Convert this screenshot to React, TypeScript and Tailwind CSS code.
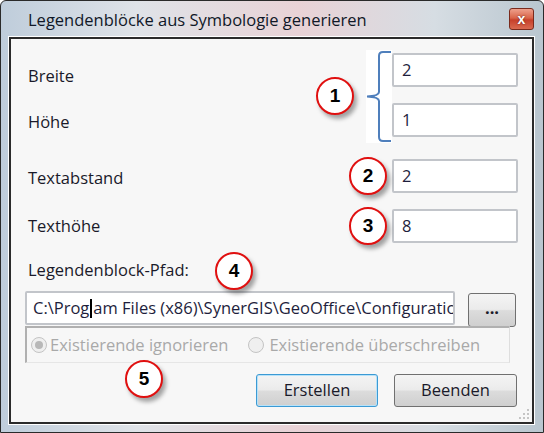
import React from "react";

const ui = { fontFamily: '"Open Sans", "Noto Sans", sans-serif' };
const mark = { fontFamily: '"Liberation Sans", Arial, sans-serif' };

function Marker({ n, className }: { n: number; className: string }) {
  return (
    <div
      className={`absolute w-[38px] h-[38px] rounded-full border-2 border-[#e01010] bg-white flex items-center justify-center shadow-[3px_4px_4px_rgba(0,0,0,0.35)] text-[19px] font-bold text-black ${className}`}
      style={mark}>
      {n}
    </div>
  );
}

function Field({ value }: { value: string }) {
  return (
    <div className="w-[126px] h-[34px] border-2 border-[#c2c5ca] rounded-[2px] bg-white flex items-center pl-[8px] text-[16.5px] text-[#1e1e3c]">
      {value}
    </div>
  );
}

function Radio({ checked }: { checked?: boolean }) {
  return (
    <span className="w-[16px] h-[16px] rounded-full border border-[#c4c4c4] bg-[#efefef] flex items-center justify-center shrink-0">
      {checked && <span className="w-[8px] h-[8px] rounded-full bg-[#b8b8b8]" />}
    </span>
  );
}

const btn =
  "h-[33px] rounded-[3px] border bg-[linear-gradient(180deg,#f4f4f4_0%,#ebebeb_48%,#dcdcdc_52%,#cfcfcf_100%)] flex items-center justify-center text-[16.5px] text-[#1a1a2a]";

export default function App() {
  return (
    <div
      className="relative w-[544px] h-[433px] overflow-hidden border border-[#2a2a2a] rounded-t-[6px] bg-[linear-gradient(90deg,#bfcddb_0%,#dfe3e8_25%,#e9d2d6_55%,#d6dde3_80%,#b9c6cf_100%)]"
      style={ui}>
      {/* title bar */}
      <div className="h-[36px] flex items-center justify-between pl-[27px] pr-[9px]">
        <span className="text-[16.5px] text-[#101828] pt-[2px]">Legendenblöcke aus Symbologie generieren</span>
        <div className="w-[25px] h-[22px] rounded-[3px] border border-[#7a2a1c] bg-[linear-gradient(180deg,#eea08c_0%,#d9654a_45%,#c7402a_55%,#d96a50_100%)] flex items-center justify-center text-white text-[14px] font-bold leading-none [text-shadow:0_0_2px_#5a1a10]" style={mark}>
          x
        </div>
      </div>

      {/* client area */}
      <div className="relative ml-[8px] mr-[9px] h-[387px] border-2 border-[#2b2b2b] outline outline-1 outline-white bg-[#f7f7f7] flex flex-col text-[#1a1a2a]">
        <div className="pt-[14px] pr-[14px] flex flex-col text-[16.5px]">
          <div className="h-[34px] flex items-center justify-between">
            <span className="pl-[17px] pt-[12px]">Breite</span>
            <Field value="2" />
          </div>
          <div className="mt-[16px] h-[34px] flex items-center justify-between">
            <span className="pl-[17px] pt-[4px]">Höhe</span>
            <Field value="1" />
          </div>
          <div className="mt-[22px] h-[34px] flex items-center justify-between">
            <span className="pl-[17px] pt-[4px]">Textabstand</span>
            <Field value="2" />
          </div>
          <div className="mt-[16px] h-[34px] flex items-center justify-between">
            <span className="pl-[17px]">Texthöhe</span>
            <Field value="8" />
          </div>
        </div>

        <div className="mt-[16px] h-[22px] flex items-center pl-[17px] text-[16.5px]">Legendenblock-Pfad:</div>

        <div className="mt-[10px] h-[35px] flex items-start pl-[14px]">
          <div className="w-[430px] h-[34px] border-2 border-[#c2c5ca] rounded-[2px] bg-white flex items-center pl-[6px] overflow-hidden whitespace-nowrap text-[16.5px] text-[#1e1e3c]">
            C:\Prog<span className="inline-block w-[2px] h-[19px] bg-black mx-[1px] shrink-0" />am Files (x86)\SynerGIS\GeoOffice\Configuration
          </div>
          <div className={`${btn} ml-[13px] mt-[2px] w-[48px] h-[34px] border-[#707070] text-[14px] font-bold pb-[4px]`}>
            ...
          </div>
        </div>

        <div className="ml-[14px] w-[485px] h-[37px] border-t-2 border-l-2 border-[#b0b0b0] border-r border-b border-r-[#dedede] border-b-[#e6e6e6] flex items-center text-[16.5px] text-[#a9a9a9]">
          <div className="flex items-center gap-[3px] pl-[4px]">
            <Radio checked />
            <span>Existierende ignorieren</span>
          </div>
          <div className="flex items-center gap-[5px] ml-[20px]">
            <Radio />
            <span>Existierende überschreiben</span>
          </div>
        </div>

        <div className="mt-[11px] flex justify-end gap-[16px] pr-[15px]">
          <div className={`${btn} w-[122px] border-[#3c9ad4] shadow-[inset_0_0_0_1px_#b7e2f9]`}>Erstellen</div>
          <div className={`${btn} w-[123px] border-[#707070]`}>Beenden</div>
        </div>

        {/* size grip */}
        <svg className="absolute right-[2px] bottom-[2px]" width="12" height="12" viewBox="0 0 12 12">
          {[[9, 1], [9, 5], [5, 5], [9, 9], [5, 9], [1, 9]].map(([x, y], i) => (
            <rect key={i} x={x} y={y} width="2" height="2" fill="#c4c4c4" />
          ))}
        </svg>
      </div>

      {/* annotations */}
      <div className="absolute left-[365px] top-[49px] w-[26px] h-[93px] bg-white">
        <svg width="26" height="93" viewBox="0 0 26 93">
          <path d="M25 2 H17 Q13 2 13 6 V42 Q13 46 1 46.5 Q13 47 13 51 V87 Q13 91 17 91 H25" fill="none" stroke="#4f7fbc" strokeWidth="2" />
        </svg>
      </div>
      <Marker n={1} className="left-[315px] top-[76px]" />
      <Marker n={2} className="left-[348px] top-[156px]" />
      <Marker n={3} className="left-[348px] top-[206px]" />
      <Marker n={4} className="left-[214px] top-[251px]" />
      <Marker n={5} className="left-[124px] top-[359px]" />
    </div>
  );
}
